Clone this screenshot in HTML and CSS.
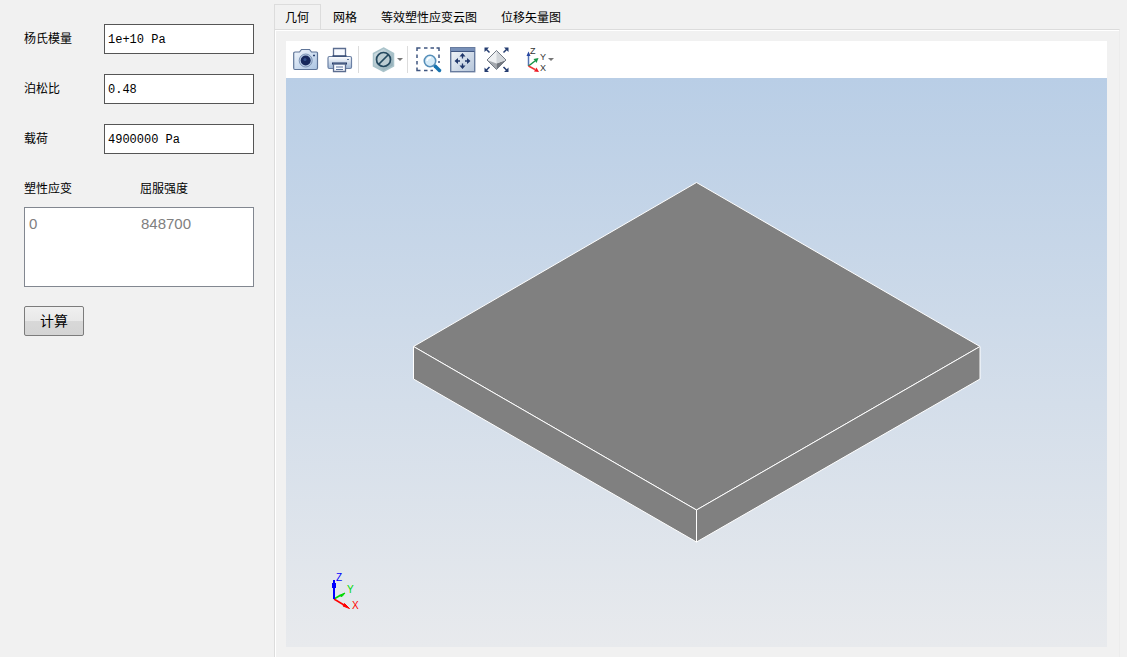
FILE: index.html
```html
<!DOCTYPE html>
<html lang="zh-CN">
<head>
<meta charset="utf-8">
<title>塑性分析</title>
<link rel="stylesheet" href="styles.css">
</head>
<body>
<div class="app">
  <form class="params">
    <div class="field">
      <label for="young">杨氏模量</label>
      <input id="young" type="text" value="1e+10 Pa">
    </div>
    <div class="field">
      <label for="poisson">泊松比</label>
      <input id="poisson" type="text" value="0.48">
    </div>
    <div class="field">
      <label for="load">载荷</label>
      <input id="load" type="text" value="4900000 Pa">
    </div>
    <table class="curve">
      <thead><tr><th scope="col">塑性应变</th><th scope="col">屈服强度</th></tr></thead>
      <tbody><tr><td>0</td><td>848700</td></tr></tbody>
    </table>
    <button class="compute" type="button">计算</button>
  </form>

  <main class="results">
    <div class="tabs" role="tablist">
      <button class="tab tab-active" type="button" role="tab" aria-selected="true">几何</button>
      <button class="tab" type="button" role="tab">网格</button>
      <button class="tab" type="button" role="tab">等效塑性应变云图</button>
      <button class="tab" type="button" role="tab">位移矢量图</button>
    </div>
    <section class="panel">
      <div class="toolbar" role="toolbar">
        <div class="group">
          <button class="tool" type="button" aria-label="截图">
            <svg viewBox="0 0 26 26">
              <defs><linearGradient id="cam" x2="1" y2="1"><stop offset="0" stop-color="#f4f8fd"/><stop offset="1" stop-color="#a9c3e2"/></linearGradient></defs>
              <path d="M2 5H6.500L8.500 2.500H16.500L18.500 5H23.500Q24.500 5 24.500 6V21Q24.500 22.500 23 22.500H2Q.700 22.500 .700 21V6Q.700 5 2 5Z" fill="url(#cam)" stroke="#5f7598" stroke-width="1.200"/>
              <circle cx="12.700" cy="13.500" r="6.500" fill="#b7cbe3" stroke="#7c93b5"/>
              <circle cx="12.700" cy="13.500" r="5" fill="#17285c"/>
              <circle cx="12" cy="12.500" r="1.500" fill="#34508a"/>
              <path d="M20 8.500h2" stroke="#2a416f" stroke-width="1.500"/>
            </svg>
          </button>
          <button class="tool" type="button" aria-label="打印">
            <svg viewBox="0 0 26 26">
              <defs><linearGradient id="prn" x2="0" y2="1"><stop offset="0" stop-color="#fff"/><stop offset="1" stop-color="#9fb7d6"/></linearGradient></defs>
              <path d="M6.500 10V1.500H18.500V10" fill="#f7faff" stroke="#5b6d90" stroke-width="1.300"/>
              <rect x="1" y="9.500" width="23.500" height="12" rx="1.500" fill="url(#prn)" stroke="#6b80a4" stroke-width="1.200"/>
              <path d="M5.500 9H19.500" stroke="#31466f" stroke-width="1.500"/>
              <path d="M5 16.500H20" stroke="#1f3465" stroke-width="2"/>
              <path d="M6.500 17V24.500H18.500V17Z" fill="#f7faff" stroke="#5b6d90" stroke-width="1.300"/>
              <path d="M9 20H16M9 22.500H16" stroke="#5a729b"/>
              <path d="M20 12.500h2" stroke="#5a729b"/>
            </svg>
          </button>
        </div>
        <div class="group group-display">
          <button class="tool tool-menu" type="button" aria-label="显示">
            <svg viewBox="0 0 26 26">
              <defs><linearGradient id="hex" x2="1" y2="1"><stop offset="0" stop-color="#dbe6ea"/><stop offset="1" stop-color="#87a5b0"/></linearGradient></defs>
              <path d="M11.500 1L21.500 6.500V19L11.500 24.500L1.500 19V6.500Z" fill="url(#hex)" stroke="#a9c3ca" stroke-width="1.500"/>
              <circle cx="11.500" cy="12.500" r="7" fill="#bccdd3" stroke="#24495f" stroke-width="1.700"/>
              <path d="M6.500 17.500L16.500 7.500" stroke="#24495f" stroke-width="1.700"/>
            </svg>
            <span class="caret"></span>
          </button>
        </div>
        <div class="group group-zoom">
          <button class="tool" type="button" aria-label="框选缩放">
            <svg viewBox="0 0 26 26">
              <path d="M1 4V1H4.500M8 1H11.500M14.500 1H18M20.500 1H23V4M23 7.500V11M23 14V16M1 7.500V11M1 14V17.500M1 20.500V23.500H4.500M8 23.500H11.500M14.500 23.500H17" fill="none" stroke="#3f5580" stroke-width="1.500"/>
              <path d="M19 19L23.500 23.500" stroke="#1673b0" stroke-width="3.500" stroke-linecap="round"/>
              <circle cx="14" cy="14" r="5.700" fill="#d6ebf8" stroke="#568fb9" stroke-width="1.600"/>
              <path d="M11 14Q11.500 10.500 15 10.500" fill="none" stroke="#fff" stroke-width="1.500"/>
            </svg>
          </button>
          <button class="tool" type="button" aria-label="适合窗口">
            <svg viewBox="0 0 26 26">
              <defs><linearGradient id="win" x2="1" y2="1"><stop offset="0" stop-color="#f5f8fb"/><stop offset="1" stop-color="#b4c4d9"/></linearGradient></defs>
              <rect x=".700" y=".700" width="24" height="24" fill="url(#win)" stroke="#687c9f" stroke-width="1.400"/>
              <path d="M1 1H24.500V4.500H1Z" fill="#7890b8"/><path d="M1 4.500H24.500" stroke="#405682"/>
              <path d="M12.500 6L15.500 9.500H9.500ZM12.500 22L15.500 18.500H9.500ZM4.500 14L8 11V17ZM20.500 14L17 11V17Z" fill="#20376b"/>
              <path d="M12.500 9V11.500M12.500 16.500V19M7 14H10M15 14H18" stroke="#20376b" stroke-width="1.300"/>
            </svg>
          </button>
          <button class="tool" type="button" aria-label="缩放到全部">
            <svg viewBox="0 0 26 26">
              <path d="M12.500 3.500L22 13L12.500 22.500L3 13Z" fill="#eef0f2"/>
              <path d="M3 13L12.500 16.500V22.500Z" fill="#a5a9ae"/><path d="M22 13L12.500 16.500V22.500Z" fill="#73777e"/>
              <path d="M12.500 3.500L22 13L12.500 16.500Z" fill="#d2d6da"/>
              <path d="M12.500 3.500L22 13L12.500 22.500L3 13Z" fill="none" stroke="#737b86"/>
              <path d="M2 2L5.500 5.500M23 2L19.500 5.500M2 23.500L5.500 20M23 23.500L19.500 20" stroke="#253d70" stroke-width="1.500"/>
              <path d="M.500 .500H5L.500 5ZM24.500 .500V5L20 .500ZM.500 25V20.500L5 25ZM24.500 25H20L24.500 20.500Z" fill="#253d70"/>
            </svg>
          </button>
        </div>
        <div class="group group-view">
          <button class="tool tool-menu" type="button" aria-label="视图方向">
            <svg viewBox="0 0 22 26">
              <path d="M2.500 19V8" stroke="#5475b4" stroke-width="1.500"/><path d="M2.500 4.500L4.500 9H.500Z" fill="#2747a2"/>
              <path d="M2.500 19L9 14" stroke="#159447" stroke-width="1.500"/><path d="M12.500 11L10.500 16L7.500 12Z" fill="#159447"/>
              <path d="M2.500 19L9 22.500" stroke="#ee3434" stroke-width="1.500"/><path d="M13 25L8 24.500L10.500 20.500Z" fill="#ee1c25"/>
              <g class="view-letters"><text x="4" y="7">Z</text><text x="14" y="13">Y</text><text x="14" y="24">X</text></g>
            </svg>
            <span class="caret"></span>
          </button>
        </div>
      </div>
      <div class="viewport">
        <svg class="model" viewBox="0 0 821 569" role="img" aria-label="几何模型">
          <g fill="#808080" stroke="#fff" stroke-width="1" stroke-linejoin="round">
            <path d="M410.500 104.500L694 268.500L410.500 432L127.500 268.500Z"/>
            <path d="M127.500 268.500L410.500 432V464L127.500 301Z"/>
            <path d="M694 268.500L410.500 432V464L694 301Z"/>
          </g>
        </svg>
        <svg class="triad" viewBox="0 0 30 40" aria-hidden="true">
          <path d="M4 26L10 22.500" stroke="#00d800" stroke-width="1.500"/><path d="M15 20L12 23.500L9 22.500Z" fill="#00d800" stroke="#00d800"/>
          <path d="M4 26L14 32" stroke="#f00" stroke-width="1.500"/><path d="M19.500 35.500L13 33L14.500 30.500Z" fill="#f00" stroke="#f00"/>
          <path d="M4 26V7" stroke="#00f" stroke-width="2"/><path d="M4 10V15" stroke="#00f" stroke-width="4"/>
          <text x="6" y="8" fill="#00f">Z</text><text x="17" y="20" fill="#00d800">Y</text><text x="22" y="36" fill="#f00">X</text>
        </svg>
      </div>
    </section>
  </main>
</div>
</body>
</html>
```
FILE: styles.css
```css
* { box-sizing: border-box; }

body {
  margin: 0;
  background: #f1f1f1;
  color: #000;
  font: 12px/16px "Liberation Sans", "Noto Sans CJK SC", sans-serif;
}

button, input { font: inherit; color: inherit; }

.app {
  display: grid;
  grid-template-columns: 274px 1fr;
  min-height: 100vh;
}

.params {
  display: flex;
  flex-direction: column;
  align-items: stretch;
  padding: 24px 20px 24px 24px;
}

.field {
  display: grid;
  grid-template-columns: 80px 1fr;
  align-items: center;
  margin-bottom: 20px;
}

.field input {
  width: 100%;
  height: 30px;
  padding: 2px 3px 0;
  border: 1px solid #555;
  border-radius: 0;
  background: #fff;
  font-family: "Liberation Mono", monospace;
}

.curve, .curve thead, .curve tbody { display: block; }

.curve tr {
  display: grid;
  grid-template-columns: 116px 1fr;
}

.curve th {
  padding: 0;
  font-weight: 400;
  text-align: left;
  line-height: 30px;
}

.curve tbody {
  height: 80px;
  margin-top: 3px;
  padding: 8px 4px;
  border: 1px solid #828790;
  background: #fff;
  color: #808080;
  font-size: 15px;
}

.curve tbody tr { grid-template-columns: 112px 1fr; }

.curve td { padding: 0; }

.compute {
  align-self: flex-start;
  width: 60px;
  height: 30px;
  margin-top: 19px;
  padding: 0;
  border: 1px solid #7c7c7c;
  border-radius: 2px;
  background: linear-gradient(#f0f0f0, #e8e8e8 50%, #d8d8d8 50%, #d4d4d4);
  font-size: 14px;
}

.results {
  display: flex;
  flex-direction: column;
  padding: 4px 7px 0 0;
}

.tabs { display: flex; }

.tab {
  height: 25px;
  padding: 2px 12px 0;
  border: 0;
  background: none;
}

.tab-active {
  padding: 1px 11px 0 10px;
  border: 1px solid #dcdcdc;
  border-bottom: 0;
}

.panel {
  flex: 1;
  display: flex;
  flex-direction: column;
  padding: 11px 12px 10px 11px;
  border: 1px solid #dcdcdc;
  border-right-color: #ececec;
  border-bottom: 0;
  box-shadow: inset 1px 1px #fff;
}

.toolbar {
  display: flex;
  align-items: center;
  height: 37px;
  padding-left: 7px;
  background: #fff;
}

.group {
  display: flex;
  align-items: center;
  gap: 8px;
  height: 27px;
  padding-right: 5px;
  border-right: 1px solid #dcdcdc;
}

.group-display { padding: 0 4px 0 13px; }

.group-zoom {
  padding: 0 0 0 8px;
  border: 0;
}

.group-view {
  padding: 0 0 0 16px;
  border: 0;
}

.tool {
  display: flex;
  align-items: center;
  padding: 0;
  border: 0;
  background: none;
}

.tool svg {
  width: 26px;
  height: 26px;
  overflow: visible;
}

.tool-menu svg { margin-right: -1px; }

.group-view svg {
  width: 22px;
  margin-right: 0;
}

.caret {
  border: 3px solid transparent;
  border-top-color: #777;
  border-bottom: 0;
}

.view-letters {
  fill: #333;
  font: 9px "Liberation Sans", sans-serif;
}

.viewport {
  position: relative;
  flex: 1;
  display: flex;
  min-height: 320px;
  background: linear-gradient(#b9cee6, #e8eaed);
}

.model {
  flex: 1;
  width: 100%;
  min-width: 0;
}

.triad {
  position: absolute;
  left: 44px;
  bottom: 34px;
  width: 30px;
  height: 40px;
  overflow: visible;
  font: 10px "Liberation Sans", sans-serif;
}
```
